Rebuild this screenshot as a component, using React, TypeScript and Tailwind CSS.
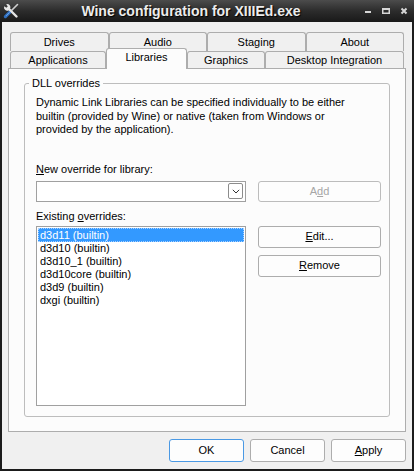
import React from "react";

const font = "font-['Liberation_Sans',Arial,sans-serif]";

function TitleBar() {
  return (
    <div className="flex h-[22px] items-center bg-linear-to-b from-[#4c4c4c] via-[#2c2c2c] to-[#191919]">
      <div className="w-[22px] h-[22px] flex items-center justify-center">
        <svg width="16" height="16" viewBox="0 0 16 16">
          {/* screwdriver */}
          <path d="M14.5 1.5 L8 8" stroke="#cfcfcf" strokeWidth="1.6" strokeLinecap="round" />
          <path d="M7.6 8.4 L2.4 13.6" stroke="#2f6fc0" strokeWidth="3.2" strokeLinecap="round" />
          <path d="M6.4 9.6 L3.4 12.6" stroke="#6aa2e6" strokeWidth="1" strokeLinecap="round" />
          {/* wrench */}
          <path d="M5 5 L13.5 13.5" stroke="#e6e6e6" strokeWidth="2.4" strokeLinecap="round" />
          <path
            d="M1.2 3.2 A3.3 3.3 0 0 0 5.6 7.4 L7 6 A3.3 3.3 0 0 0 3.2 1.2 L4.8 3.4 L3.4 4.8 Z"
            fill="#e6e6e6"
          />
        </svg>
      </div>
      <div className="flex-1 flex justify-center">
        <span className="text-[14px] font-bold text-[#ececec] [text-shadow:1px_1px_1px_#000]">
          Wine configuration for XIIIEd.exe
        </span>
      </div>
      <div className="w-[54px] h-[22px] flex items-center gap-[10px] pl-[4px]">
        <svg width="8" height="8" viewBox="0 0 8 8">
          <rect x="1" y="4" width="6" height="2" fill="#d6d6d6" />
        </svg>
        <svg width="8" height="8" viewBox="0 0 8 8">
          <rect x="0.75" y="1.75" width="6.5" height="4.5" fill="none" stroke="#d6d6d6" strokeWidth="1.5" />
          <rect x="0" y="1" width="8" height="2" fill="#d6d6d6" />
        </svg>
        <svg width="8" height="8" viewBox="0 0 8 8">
          <path d="M1.5 1.5 L6.5 6.5 M6.5 1.5 L1.5 6.5" stroke="#d6d6d6" strokeWidth="2" />
        </svg>
      </div>
    </div>
  );
}

function Tab({ label, w, selected }: { label: string; w?: string; selected?: boolean }) {
  if (selected) {
    return (
      <div
        className={`${w} h-[21px] mb-[-1px] relative z-10 bg-[#fcfcfc] border-t border-l border-r border-[#adadad] rounded-t-[3px] flex items-center justify-center pb-[3px]`}
      >
        {label}
      </div>
    );
  }
  return (
    <div
      className={`${w ?? "flex-1"} h-full bg-[#f0f0f0] border-t border-l border-r border-[#adadad] rounded-t-[3px] flex items-center justify-center`}
    >
      {label}
    </div>
  );
}

function Btn({
  children,
  disabled,
  primary,
  className = "",
}: {
  children: React.ReactNode;
  disabled?: boolean;
  primary?: boolean;
  className?: string;
}) {
  return (
    <div
      className={`flex items-center justify-center rounded-[3px] border bg-[#fdfdfd] ${
        primary ? "border-[#4a99e4]" : disabled ? "border-[#bcbcbc]" : "border-[#adadad]"
      } ${disabled ? "text-[#a6a6a6]" : "text-black"} ${className}`}
    >
      {children}
    </div>
  );
}

const overrides = [
  "d3d11 (builtin)",
  "d3d10 (builtin)",
  "d3d10_1 (builtin)",
  "d3d10core (builtin)",
  "d3d9 (builtin)",
  "dxgi (builtin)",
];

export default function App() {
  return (
    <div className={`w-[414px] h-[471px] bg-[#1b1b1b] flex flex-col ${font} text-[11px] text-black`}>
      <TitleBar />
      <div className="flex-1 mx-[2px] mb-[2px] bg-[#f0f0f0] px-[6px] pt-[10px] flex flex-col">
        <div className="flex mx-[2px] h-[19px]">
          <Tab label="Drives" />
          <Tab label="Audio" />
          <Tab label="Staging" />
          <Tab label="About" />
        </div>
        <div className="flex mx-[2px] h-[17px] items-end">
          <Tab label="Applications" w="w-[96px]" />
          <Tab label="Libraries" w="w-[81px]" selected />
          <Tab label="Graphics" w="w-[78px]" />
          <Tab label="Desktop Integration" w="flex-1" />
        </div>
        <div className="h-[364px] border border-[#adadad] bg-[#fcfcfc] pt-[14px] pl-[15px] pr-[15px]">
          <div className="relative h-[334px] border border-[#bdbdbd] rounded-[3px] pl-[11px] pr-[8px] pt-[11px]">
            <span className="absolute left-[4px] top-[-8px] bg-[#fcfcfc] px-[3px] leading-[14px]">
              DLL overrides
            </span>
            <p className="leading-[13.5px] pt-[1px]">
              Dynamic Link Libraries can be specified individually to be either
              <br />
              builtin (provided by Wine) or native (taken from Windows or
              <br />
              provided by the application).
            </p>
            <div className="mt-[26px] leading-[13px]">
              <span className="underline">N</span>ew override for library:
            </div>
            <div className="flex gap-[12px] mt-[5px]">
              <div className="w-[210px] h-[21px] border border-[#a0a0a0] bg-white flex items-center justify-end pr-[2px]">
                <div className="w-[15px] h-[16px] border border-[#8c8c8c] rounded-[2px] flex items-center justify-center">
                  <svg width="8" height="5" viewBox="0 0 8 5">
                    <path d="M0.8 0.8 L4 4 L7.2 0.8" fill="none" stroke="#333" strokeWidth="1" />
                  </svg>
                </div>
              </div>
              <Btn disabled className="w-[123px] h-[21px]">
                <span>
                  A<span className="underline">d</span>d
                </span>
              </Btn>
            </div>
            <div className="mt-[8px] leading-[13px]">
              Existing <span className="underline">o</span>verrides:
            </div>
            <div className="flex gap-[12px] mt-[3px]">
              <div className="w-[210px] h-[180px] border border-[#a0a0a0] bg-white pt-[1px] px-[1px]">
                {overrides.map((o, i) => (
                  <div
                    key={o}
                    className={`h-[13px] leading-[13px] pl-[2px] ${
                      i === 0 ? "bg-[#3399ff] text-white outline-1 outline-dotted outline-[#a9d1ff] -outline-offset-1 h-[14px] leading-[14px]" : ""
                    }`}
                  >
                    {o}
                  </div>
                ))}
              </div>
              <div className="w-[123px] flex flex-col gap-[7px]">
                <Btn className="h-[22px]">
                  <span>
                    <span className="underline">E</span>dit...
                  </span>
                </Btn>
                <Btn className="h-[22px]">
                  <span>
                    <span className="underline">R</span>emove
                  </span>
                </Btn>
              </div>
            </div>
          </div>
        </div>
        <div className="flex justify-end gap-[6px] mt-[7px]">
          <Btn primary className="w-[75px] h-[23px]">
            OK
          </Btn>
          <Btn className="w-[75px] h-[23px]">Cancel</Btn>
          <Btn className="w-[75px] h-[23px]">
            <span>
              <span className="underline">A</span>pply
            </span>
          </Btn>
        </div>
      </div>
    </div>
  );
}
